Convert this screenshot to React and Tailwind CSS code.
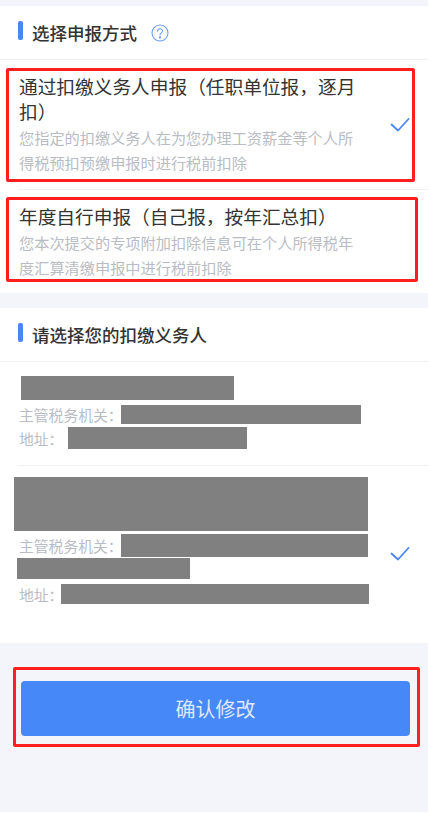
const cjk = "font-['Noto_Sans_CJK_SC','Liberation_Sans',sans-serif]";

function Check({ className }) {
  return (
    <svg viewBox="0 0 20 16" className={className} fill="none" stroke="#4a86f0" strokeWidth="1.8" strokeLinecap="round" strokeLinejoin="round">
      <path d="M1.5 7.5 L8 13.5 L18.5 2" />
    </svg>
  );
}

function Heading({ children, after }) {
  return (
    <div className="flex h-[54px] items-center border-b border-[#f0f1f4] pl-[18px]">
      <span className="mr-[9px] h-[19px] w-[5px] -translate-y-[2px] rounded-[2px] bg-[#4a86f5]" />
      <span className="text-[17.5px] leading-6 font-medium text-[#333333]">{children}</span>
      {after}
    </div>
  );
}

function Redact({ className }) {
  return <div className={`shrink-0 bg-[#808080] ${className}`} />;
}

export default function App() {
  return (
    <div className={`h-[813px] w-[430px] overflow-hidden bg-white ${cjk}`}>
      <div className="h-[812px] w-[428px] bg-[#f3f5fa] pt-[6px]">
        <section className="h-[287px] bg-white">
          <Heading
            after={
              <svg viewBox="0 0 18 18" className="ml-[14px] h-[18px] w-[18px]" fill="none" stroke="#6f9ff5" strokeWidth="1.1">
                <circle cx="9" cy="9" r="8" />
                <path d="M6.6 7.2 C6.6 4 11.5 4 11.5 7 C11.5 8.8 9 8.9 9 11" strokeLinecap="round" />
                <circle cx="9" cy="13.4" r="0.6" fill="#6f9ff5" />
              </svg>
            }
          >
            选择申报方式
          </Heading>
          <div className="relative ml-[18px] flex h-[130px] items-center border-b border-[#f0f1f4] pb-[2px] pl-[1px]">
            <div className="w-[338px]">
              <p className="text-[18.7px] leading-[25px] text-[#333333]">通过扣缴义务人申报（任职单位报，逐月扣）</p>
              <p className="mt-[2px] text-[15.2px] leading-[24.5px] text-[#b9bcc4]">您指定的扣缴义务人在为您办理工资薪金等个人所得税预扣预缴申报时进行税前扣除</p>
            </div>
            <Check className="absolute top-[57px] left-[372px] h-[16px] w-[20px]" />
            <div className="absolute top-[8px] -left-[12px] h-[114px] w-[409px] rounded-[2px] border-[3px] border-[#ff1f1f]" />
          </div>
          <div className="relative ml-[18px] pt-[13px] pl-[1px]">
            <p className="text-[18.7px] leading-[25px] text-[#333333]">年度自行申报（自己报，按年汇总扣）</p>
            <p className="mt-[2px] w-[338px] text-[15.2px] leading-[25px] text-[#b9bcc4]">您本次提交的专项附加扣除信息可在个人所得税年度汇算清缴申报中进行税前扣除</p>
            <div className="absolute top-[7px] -left-[12px] h-[85px] w-[412px] rounded-[2px] border-[3px] border-[#ff1f1f]" />
          </div>
        </section>

        <section className="mt-[15px] h-[335px] bg-white">
          <Heading>请选择您的扣缴义务人</Heading>
          <div className="ml-[18px] h-[104px] border-b border-[#f0f1f4] pt-[14px]">
            <Redact className="ml-[3px] h-[24px] w-[213px]" />
            <div className="mt-[5px] flex h-[19px] items-center pl-[1px] text-[14.8px] leading-[19px] text-[#b9bcc4]">
              <span className="w-[101px] whitespace-nowrap">主管税务机关：</span>
              <Redact className="ml-[1px] h-[19px] w-[240px]" />
            </div>
            <div className="mt-[3px] flex h-[22px] items-center pl-[1px] text-[14.8px] leading-[19px] text-[#b9bcc4]">
              <span className="w-[49px] whitespace-nowrap">地址：</span>
              <Redact className="h-[22px] w-[179px]" />
            </div>
          </div>
          <div className="relative h-[180px] pt-[11px] pl-[14px]">
            <Redact className="h-[54px] w-[354px]" />
            <div className="mt-[3px] flex h-[23px] items-center pl-[5px] text-[14.8px] leading-[19px] text-[#b9bcc4]">
              <span className="w-[102px] whitespace-nowrap">主管税务机关：</span>
              <Redact className="h-[23px] w-[247px]" />
            </div>
            <Redact className="mt-[1px] ml-[3px] h-[21px] w-[173px]" />
            <div className="mt-[5px] flex h-[20px] items-center pl-[5px] text-[14.8px] leading-[19px] text-[#b9bcc4]">
              <span className="w-[42px] whitespace-nowrap">地址：</span>
              <Redact className="h-[20px] w-[308px]" />
            </div>
            <Check className="absolute top-[80px] left-[390px] h-[16px] w-[20px]" />
          </div>
        </section>

        <div className="relative mt-[24px] ml-[13px] h-[80px] w-[407px] rounded-[2px] border-[3px] border-[#ff1f1f] pt-[11px] pr-[7px] pl-[5px]">
          <button className="h-[55px] w-full rounded-[4px] bg-[#4688f8] text-[20px] text-[#dfe9fb]">确认修改</button>
        </div>
      </div>
    </div>
  );
}
